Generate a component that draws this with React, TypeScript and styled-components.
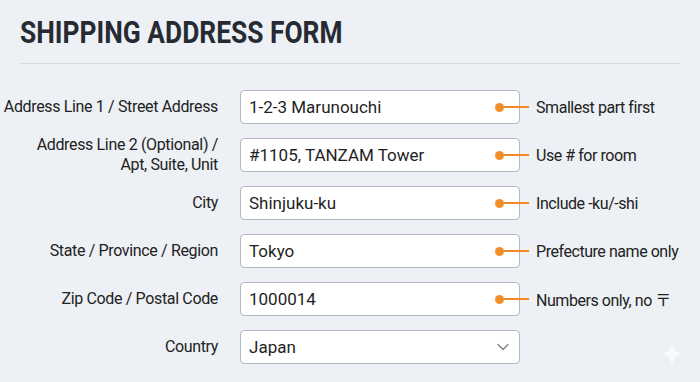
import React from 'react'
import styled, { createGlobalStyle } from 'styled-components'

const GlobalStyle = createGlobalStyle`
	html, body {
		margin: 0;
		padding: 0;
		background: #edf1f5;
	}
	body {
		font-family: Roboto, 'Liberation Sans', Arial, sans-serif;
		color: #222;
	}
`

type Field = {
	label: string[]
	value: string
	hint?: string
	select?: boolean
}

const fields: Field[] = [
	{ label: ['Address Line 1 / Street Address'], value: '1-2-3 Marunouchi', hint: 'Smallest part first' },
	{ label: ['Address Line 2 (Optional) /', 'Apt, Suite, Unit'], value: '#1105, TANZAM Tower', hint: 'Use # for room' },
	{ label: ['City'], value: 'Shinjuku-ku', hint: 'Include -ku/-shi' },
	{ label: ['State / Province / Region'], value: 'Tokyo', hint: 'Prefecture name only' },
	{ label: ['Zip Code / Postal Code'], value: '1000014', hint: 'Numbers only, no 〒' },
	{ label: ['Country'], value: 'Japan', select: true },
]

const Chevron = () => (
	<svg width="12" height="8" viewBox="0 0 12 8">
		<path d="M1 1.5 L6 6.5 L11 1.5" fill="none" stroke="#7a7f86" strokeWidth="1.3" strokeLinecap="round" strokeLinejoin="round" />
	</svg>
)

const Sparkle = () => (
	<svg width="24" height="24" viewBox="0 0 26 26">
		<path d="M13 0 C14 8 18 12 26 13 C18 14 14 18 13 26 C12 18 8 14 0 13 C8 12 12 8 13 0 Z" fill="#ffffff" opacity="0.55" />
	</svg>
)

export default function App() {
	return (
		<Page>
			<GlobalStyle />
			<Header>
				<Title>SHIPPING ADDRESS FORM</Title>
			</Header>
			<Divider />
			<FormGrid>
				{fields.map((f, i) => (
					<React.Fragment key={i}>
						<Label>
							{f.label.map((l, j) => (
								<span key={j}>{l}</span>
							))}
						</Label>
						<InputBox $hint={!!f.hint}>
							<InputText>{f.value}</InputText>
							{f.select && <Chevron />}
							{f.hint && <Dot />}
						</InputBox>
						<Hint>{f.hint}</Hint>
					</React.Fragment>
				))}
			</FormGrid>
			<Watermark>
				<Sparkle />
			</Watermark>
		</Page>
	)
}

const Page = styled.div`
	position: relative;
	width: 700px;
	height: 382px;
	overflow: hidden;
	background: #edf1f5;
`

const Header = styled.div`
	padding: 14px 0 0 20px;
	height: 36px;
`

const Title = styled.h1`
	display: inline-block;
	margin: 0;
	font-family: Roboto, 'Liberation Sans', sans-serif;
	font-weight: 700;
	font-size: 31px;
	line-height: 38px;
	color: #262b33;
	transform: scaleX(0.85);
	transform-origin: left center;
	white-space: nowrap;
`

const Divider = styled.div`
	margin: 13px 20px 0 20px;
	height: 1px;
	background: #d6dbe1;
`

const FormGrid = styled.div`
	display: grid;
	grid-template-columns: 218px 280px 1fr;
	grid-auto-rows: 34px;
	column-gap: 22px;
	row-gap: 14px;
	margin-top: 26px;
`

const Label = styled.div`
	display: flex;
	flex-direction: column;
	justify-content: center;
	align-items: flex-end;
	text-align: right;
	font-size: 16px;
	letter-spacing: -0.35px;
	line-height: 20px;
	color: #222;
	white-space: nowrap;
`

const InputBox = styled.div<{ $hint: boolean }>`
	position: relative;
	display: flex;
	align-items: center;
	justify-content: space-between;
	box-sizing: border-box;
	height: 34px;
	padding: 0 10px 0 8px;
	background: #ffffff;
	border: 1px solid #b3b8be;
	border-radius: 4px;
	${p =>
		p.$hint &&
		`
		&::after {
			content: '';
			position: absolute;
			left: 259px;
			top: 15px;
			width: 29px;
			height: 2px;
			background: #ef8a22;
		}
	`}
`

const InputText = styled.span`
	font-size: 17px;
	color: #1f1f1f;
`

const Dot = styled.span`
	position: absolute;
	left: 254px;
	top: 12px;
	width: 9px;
	height: 9px;
	border-radius: 50%;
	background: #f2902e;
`

const Hint = styled.div`
	display: flex;
	align-items: center;
	margin-left: -6px;
	font-family: Roboto, 'Noto Sans CJK JP', sans-serif;
	font-size: 16px;
	letter-spacing: -0.45px;
	color: #222;
	white-space: nowrap;
`

const Watermark = styled.div`
	position: absolute;
	left: 660px;
	top: 342px;
`
